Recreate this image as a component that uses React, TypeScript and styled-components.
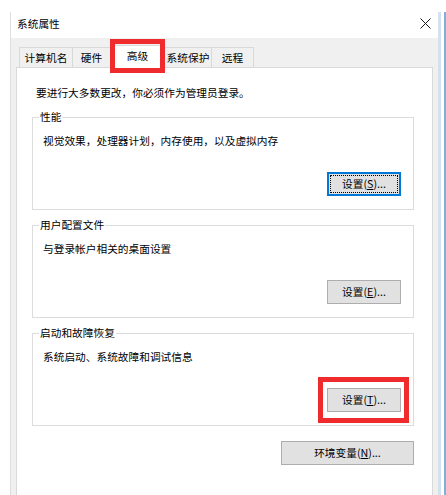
import styled, { createGlobalStyle } from "styled-components";

const GlobalStyle = createGlobalStyle`
  html, body {
    margin: 0;
    padding: 0;
    background: #ffffff;
  }
  body {
    font-family: "Noto Sans CJK SC", "Liberation Sans", sans-serif;
    font-size: 10.7px;
    color: #000;
  }
`;

interface TabInfo {
  label: string;
  width: number;
  selected?: boolean;
}

const tabs: TabInfo[] = [
  { label: "计算机名", width: 54 },
  { label: "硬件", width: 39 },
  { label: "高级", width: 55, selected: true },
  { label: "系统保护", width: 48 },
  { label: "远程", width: 43 },
];

interface GroupInfo {
  title: string;
  desc: string;
  key: string;
  focused?: boolean;
  marked?: boolean;
}

const groups: GroupInfo[] = [
  { title: "性能", desc: "视觉效果，处理器计划，内存使用，以及虚拟内存", key: "S", focused: true },
  { title: "用户配置文件", desc: "与登录帐户相关的桌面设置", key: "E" },
  { title: "启动和故障恢复", desc: "系统启动、系统故障和调试信息", key: "T", marked: true },
];

export default function App() {
  return (
    <>
      <GlobalStyle />
      <Screen>
        <Window>
          <TitleBar>
            <Title>系统属性</Title>
            <CloseIcon width="11" height="11" viewBox="0 0 11 11">
              <path d="M0.5 0.5 L10.5 10.5 M10.5 0.5 L0.5 10.5" stroke="#1a1a1a" strokeWidth="1" />
            </CloseIcon>
          </TitleBar>
          <Body>
            <TabStrip>
              {tabs.map((t) => (
                <Tab key={t.label} $width={t.width} $selected={t.selected}>
                  {t.label}
                </Tab>
              ))}
            </TabStrip>
            <Panel>
              <Intro>要进行大多数更改，你必须作为管理员登录。</Intro>
              {groups.map((g) => (
                <Group key={g.title}>
                  <Legend>{g.title}</Legend>
                  <Desc>{g.desc}</Desc>
                  <ButtonRow>
                    <Button $width={74} $focused={g.focused} $marked={g.marked}>
                      设置(<u>{g.key}</u>)...
                    </Button>
                  </ButtonRow>
                </Group>
              ))}
              <EnvRow>
                <Button $width={133}>
                  环境变量(<u>N</u>)...
                </Button>
              </EnvRow>
            </Panel>
          </Body>
        </Window>
        <Desktop />
      </Screen>
    </>
  );
}

const Screen = styled.div`
  display: flex;
  height: 495px;
  padding: 12px 0 0 10px;
  box-sizing: border-box;
  overflow: hidden;
`;

const Window = styled.div`
  width: 428px;
  display: flex;
  flex-direction: column;
  border-left: 1px solid #dedede;
  box-sizing: border-box;
`;

const TitleBar = styled.div`
  height: 26px;
  display: flex;
  align-items: center;
  justify-content: space-between;
  padding: 0 7px 0 6px;
  background: #ffffff;
`;

const Title = styled.span`
  line-height: 16px;
  margin-top: -2px;
`;

const CloseIcon = styled.svg`
  display: block;
  margin-top: -3px;
`;

const Body = styled.div`
  flex: 1;
  display: flex;
  flex-direction: column;
  background: #f0f0f0;
  padding: 9px 5px 0 5px;
`;

const TabStrip = styled.div`
  display: flex;
  align-items: flex-end;
  padding-left: 3px;
  height: 20px;
  position: relative;
  z-index: 1;
`;

const Tab = styled.div<{ $width: number; $selected?: boolean }>`
  position: relative;
  width: ${(p) => p.$width}px;
  height: ${(p) => (p.$selected ? 23 : 20)}px;
  margin-bottom: ${(p) => (p.$selected ? -1 : 0)}px;
  box-sizing: border-box;
  display: flex;
  align-items: center;
  justify-content: center;
  padding-bottom: ${(p) => (p.$selected ? 3 : 0)}px;
  border: 1px solid #d9d9d9;
  border-bottom: none;
  background: ${(p) => (p.$selected ? "#ffffff" : "#f0f0f0")};
  z-index: ${(p) => (p.$selected ? 2 : 1)};
  line-height: 16px;
  white-space: nowrap;

  & + & {
    margin-left: -1px;
  }

  ${(p) =>
    p.$selected &&
    `
    &::after {
      content: "";
      position: absolute;
      top: -7px;
      bottom: -5px;
      left: -1px;
      right: -1px;
      border: 5px solid #f02b2e;
    }
  `}
`;

const Panel = styled.div`
  flex: 1;
  background: #ffffff;
  border: 1px solid #d9d9d9;
  border-bottom: none;
  padding: 17px 18px 0 15px;
  display: flex;
  flex-direction: column;
`;

const Intro = styled.div`
  line-height: 16px;
  margin-left: 4px;
`;

const Group = styled.fieldset`
  margin: 8px 0 0 0;
  border: 1px solid #dcdcdc;
  padding: 8px 12px 13px 10px;
  display: flex;
  flex-direction: column;
  min-width: 0;

  & + & {
    margin-top: 7px;
  }
`;

const Legend = styled.legend`
  padding: 0 1px;
  margin-left: -4px;
  line-height: 16px;
`;

const Desc = styled.div`
  line-height: 16px;
`;

const ButtonRow = styled.div`
  display: flex;
  justify-content: flex-end;
  margin-top: 23px;
`;

const EnvRow = styled.div`
  display: flex;
  justify-content: flex-end;
  margin-top: 15px;
`;

const Button = styled.button<{ $width: number; $focused?: boolean; $marked?: boolean }>`
  position: relative;
  width: ${(p) => p.$width}px;
  height: 24px;
  box-sizing: border-box;
  padding: 0;
  font: inherit;
  color: #000;
  line-height: 16px;
  background: #e1e1e1;
  border: ${(p) => (p.$focused ? "2px solid #0078d7" : "1px solid #adadad")};
  outline: ${(p) => (p.$focused ? "1px dotted #000" : "none")};
  outline-offset: -4px;

  u {
    text-decoration: underline;
    text-underline-offset: 1px;
  }

  ${(p) =>
    p.$marked &&
    `
    &::after {
      content: "";
      position: absolute;
      top: -12px;
      bottom: -12px;
      left: -10px;
      right: -9px;
      border: 5px solid #f02b2e;
    }
  `}
`;

const Desktop = styled.div`
  width: 8px;
  flex-shrink: 0;
  box-sizing: border-box;
  border-left: 3px solid #d3e2ee;
  border-right: 2px solid #7fb0dc;
  background: #ffffff;
`;
